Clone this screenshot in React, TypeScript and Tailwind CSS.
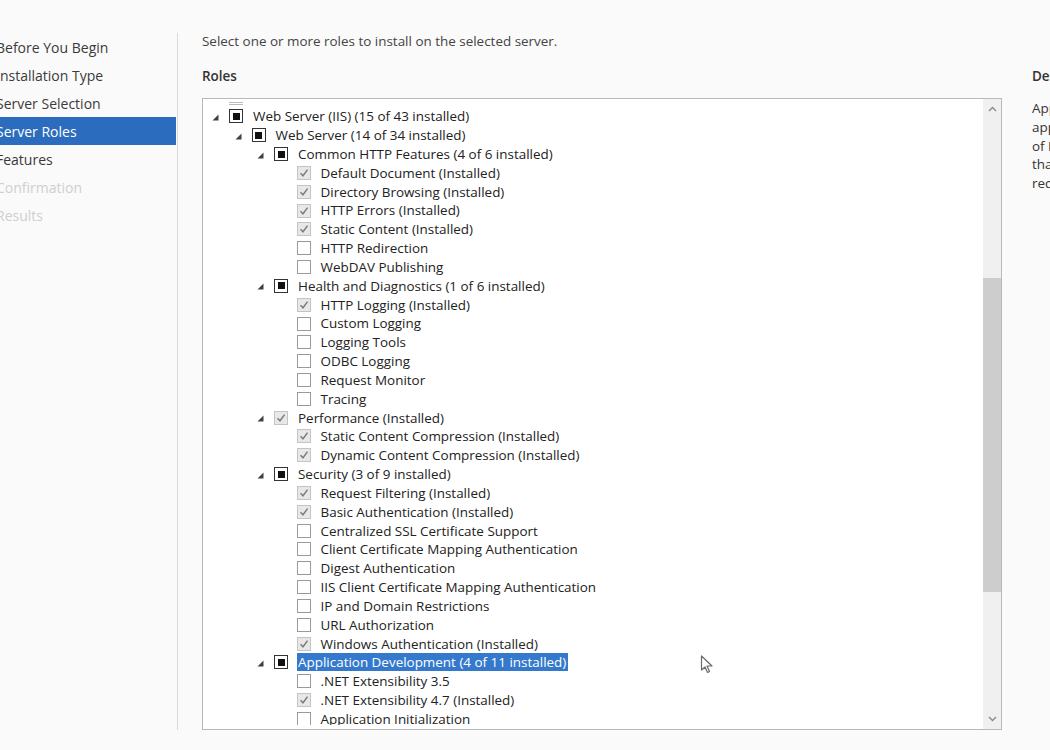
import React from 'react';

type State = 'partial' | 'installed' | 'empty';

interface Row {
  level: number;
  label: string;
  state: State;
  expanded?: boolean;
  selected?: boolean;
}

const rows: Row[] = [
  { level: 0, label: 'Web Server (IIS) (15 of 43 installed)', state: 'partial', expanded: true },
  { level: 1, label: 'Web Server (14 of 34 installed)', state: 'partial', expanded: true },
  { level: 2, label: 'Common HTTP Features (4 of 6 installed)', state: 'partial', expanded: true },
  { level: 3, label: 'Default Document (Installed)', state: 'installed' },
  { level: 3, label: 'Directory Browsing (Installed)', state: 'installed' },
  { level: 3, label: 'HTTP Errors (Installed)', state: 'installed' },
  { level: 3, label: 'Static Content (Installed)', state: 'installed' },
  { level: 3, label: 'HTTP Redirection', state: 'empty' },
  { level: 3, label: 'WebDAV Publishing', state: 'empty' },
  { level: 2, label: 'Health and Diagnostics (1 of 6 installed)', state: 'partial', expanded: true },
  { level: 3, label: 'HTTP Logging (Installed)', state: 'installed' },
  { level: 3, label: 'Custom Logging', state: 'empty' },
  { level: 3, label: 'Logging Tools', state: 'empty' },
  { level: 3, label: 'ODBC Logging', state: 'empty' },
  { level: 3, label: 'Request Monitor', state: 'empty' },
  { level: 3, label: 'Tracing', state: 'empty' },
  { level: 2, label: 'Performance (Installed)', state: 'installed', expanded: true },
  { level: 3, label: 'Static Content Compression (Installed)', state: 'installed' },
  { level: 3, label: 'Dynamic Content Compression (Installed)', state: 'installed' },
  { level: 2, label: 'Security (3 of 9 installed)', state: 'partial', expanded: true },
  { level: 3, label: 'Request Filtering (Installed)', state: 'installed' },
  { level: 3, label: 'Basic Authentication (Installed)', state: 'installed' },
  { level: 3, label: 'Centralized SSL Certificate Support', state: 'empty' },
  { level: 3, label: 'Client Certificate Mapping Authentication', state: 'empty' },
  { level: 3, label: 'Digest Authentication', state: 'empty' },
  { level: 3, label: 'IIS Client Certificate Mapping Authentication', state: 'empty' },
  { level: 3, label: 'IP and Domain Restrictions', state: 'empty' },
  { level: 3, label: 'URL Authorization', state: 'empty' },
  { level: 3, label: 'Windows Authentication (Installed)', state: 'installed' },
  { level: 2, label: 'Application Development (4 of 11 installed)', state: 'partial', expanded: true, selected: true },
  { level: 3, label: '.NET Extensibility 3.5', state: 'empty' },
  { level: 3, label: '.NET Extensibility 4.7 (Installed)', state: 'installed' },
  { level: 3, label: 'Application Initialization', state: 'empty' },
];

const indent = ['pl-[9px]', 'pl-[31.5px]', 'pl-[54px]', 'pl-[76.5px]'];

const steps = [
  { label: 'Before You Begin' },
  { label: 'Installation Type' },
  { label: 'Server Selection' },
  { label: 'Server Roles', active: true },
  { label: 'Features' },
  { label: 'Confirmation', disabled: true },
  { label: 'Results', disabled: true },
];

const Check: React.FC<{ state: State }> = ({ state }) => {
  if (state === 'installed') {
    return (
      <div className="w-[14px] h-[14px] border border-[#c4c4c4] bg-[#e8e8e8] flex items-center justify-center">
        <svg width="10" height="10" viewBox="0 0 10 10">
          <path d="M1.5 5.2 L4 7.8 L8.6 1.6" fill="none" stroke="#7d7d7d" strokeWidth="1.5" />
        </svg>
      </div>
    );
  }
  if (state === 'partial') {
    return (
      <div className="w-[14px] h-[14px] border border-[#333] bg-white flex items-center justify-center">
        <div className="w-[7px] h-[7px] bg-[#111]" />
      </div>
    );
  }
  return <div className="w-[14px] h-[14px] border border-[#9a9a9a] bg-white" />;
};

const Expander: React.FC = () => (
  <svg width="7" height="7" viewBox="0 0 7 7" className="mt-[2px]">
    <polygon points="6.5,0.5 6.5,6.5 0.5,6.5" fill="#404040" />
  </svg>
);

const TreeRow: React.FC<{ row: Row }> = ({ row }) => (
  <div className={`h-[18.84px] flex items-center ${indent[row.level]}`}>
    <div className="w-[17px] shrink-0 flex items-center">{row.expanded && <Expander />}</div>
    <Check state={row.state} />
    <span
      className={
        row.selected
          ? 'ml-[9px] pl-[1px] pr-[2px] leading-[18px] bg-[#3479cc] text-white whitespace-nowrap'
          : 'ml-[10px] text-[#222] whitespace-nowrap'
      }
    >
      {row.label}
    </span>
  </div>
);

const App: React.FC = () => {
  return (
    <div
      className="relative w-[1050px] h-[750px] overflow-hidden bg-[#fafafa] text-[13.45px]"
      style={{ fontFamily: '"Segoe UI", "Open Sans", sans-serif' }}
    >
      <div className="flex h-full">
        {/* wizard steps */}
        <div className="w-[179px] shrink-0 pt-[33px] pb-[20px] flex">
          <div className="w-[178px] border-r border-[#dadada]">
            {steps.map((s) => (
              <div
                key={s.label}
                className={
                  s.active
                    ? 'h-[28px] w-[176px] flex items-center bg-[#2b6cbe] text-white text-[14px] whitespace-nowrap'
                    : `h-[28px] flex items-center text-[14px] whitespace-nowrap ${
                        s.disabled ? 'text-[#cfcfcf]' : 'text-[#3a3a3a]'
                      }`
                }
              >
                <span className="-ml-[4px]">{s.label}</span>
              </div>
            ))}
          </div>
        </div>

        {/* main */}
        <div className="flex-1 pl-[23px] pt-[31px]">
          <div className="text-[#444] h-[20px] leading-[20px] whitespace-nowrap">
            Select one or more roles to install on the selected server.
          </div>
          <div className="flex gap-[30px] mt-[15px]">
            <div className="w-[800px] shrink-0">
              <div className="h-[20px] leading-[20px] font-semibold text-[#333]">Roles</div>
              <div className="mt-[12px] h-[632px] border border-[#b9b9b9] bg-white flex">
                <div className="flex-1 overflow-hidden mb-[4px]">
                  <div className="h-[6px] pl-[26px] flex items-end">
                    <div className="w-[14px] h-[3px] border-b border-t border-[#bdbdbd]" />
                  </div>
                  <div className="pt-[2px]">
                    {rows.map((r, i) => (
                      <TreeRow key={i} row={r} />
                    ))}
                  </div>
                </div>
                {/* scrollbar */}
                <div className="w-[18px] shrink-0 bg-[#f0f0f0] flex flex-col items-center">
                  <div className="h-[20px] flex items-center justify-center">
                    <svg width="9" height="6" viewBox="0 0 9 6">
                      <path d="M1 5 L4.5 1.5 L8 5" fill="none" stroke="#8a8a8a" strokeWidth="1.4" />
                    </svg>
                  </div>
                  <div className="mt-[159px] w-full h-[314px] bg-[#cdcdcd]" />
                  <div className="flex-1" />
                  <div className="h-[20px] flex items-center justify-center">
                    <svg width="9" height="6" viewBox="0 0 9 6">
                      <path d="M1 1 L4.5 4.5 L8 1" fill="none" stroke="#8a8a8a" strokeWidth="1.4" />
                    </svg>
                  </div>
                </div>
              </div>
            </div>

            {/* description */}
            <div className="w-[300px] shrink-0">
              <div className="h-[20px] leading-[20px] font-semibold text-[#333]">Description</div>
              <div className="mt-[12px] pt-[1px] text-[#333] leading-[18.8px] whitespace-nowrap">
                <div>Application Development provides</div>
                <div>application infrastructure for hosting</div>
                <div>of IIS Web applications and services</div>
                <div>that are built using technologies that</div>
                <div>require support from the server.</div>
              </div>
            </div>
          </div>
        </div>
      </div>

      {/* mouse pointer */}
      <svg className="absolute left-[700px] top-[655px]" width="14" height="20" viewBox="0 0 14 20">
        <path
          d="M1.5 1 L1.5 15 L5 12 L7.5 17.5 L9.5 16.5 L7 11 L12 11 Z"
          fill="#ffffff"
          stroke="#6a6a6a"
          strokeWidth="1.2"
          strokeLinejoin="round"
        />
      </svg>
    </div>
  );
};

export default App;
